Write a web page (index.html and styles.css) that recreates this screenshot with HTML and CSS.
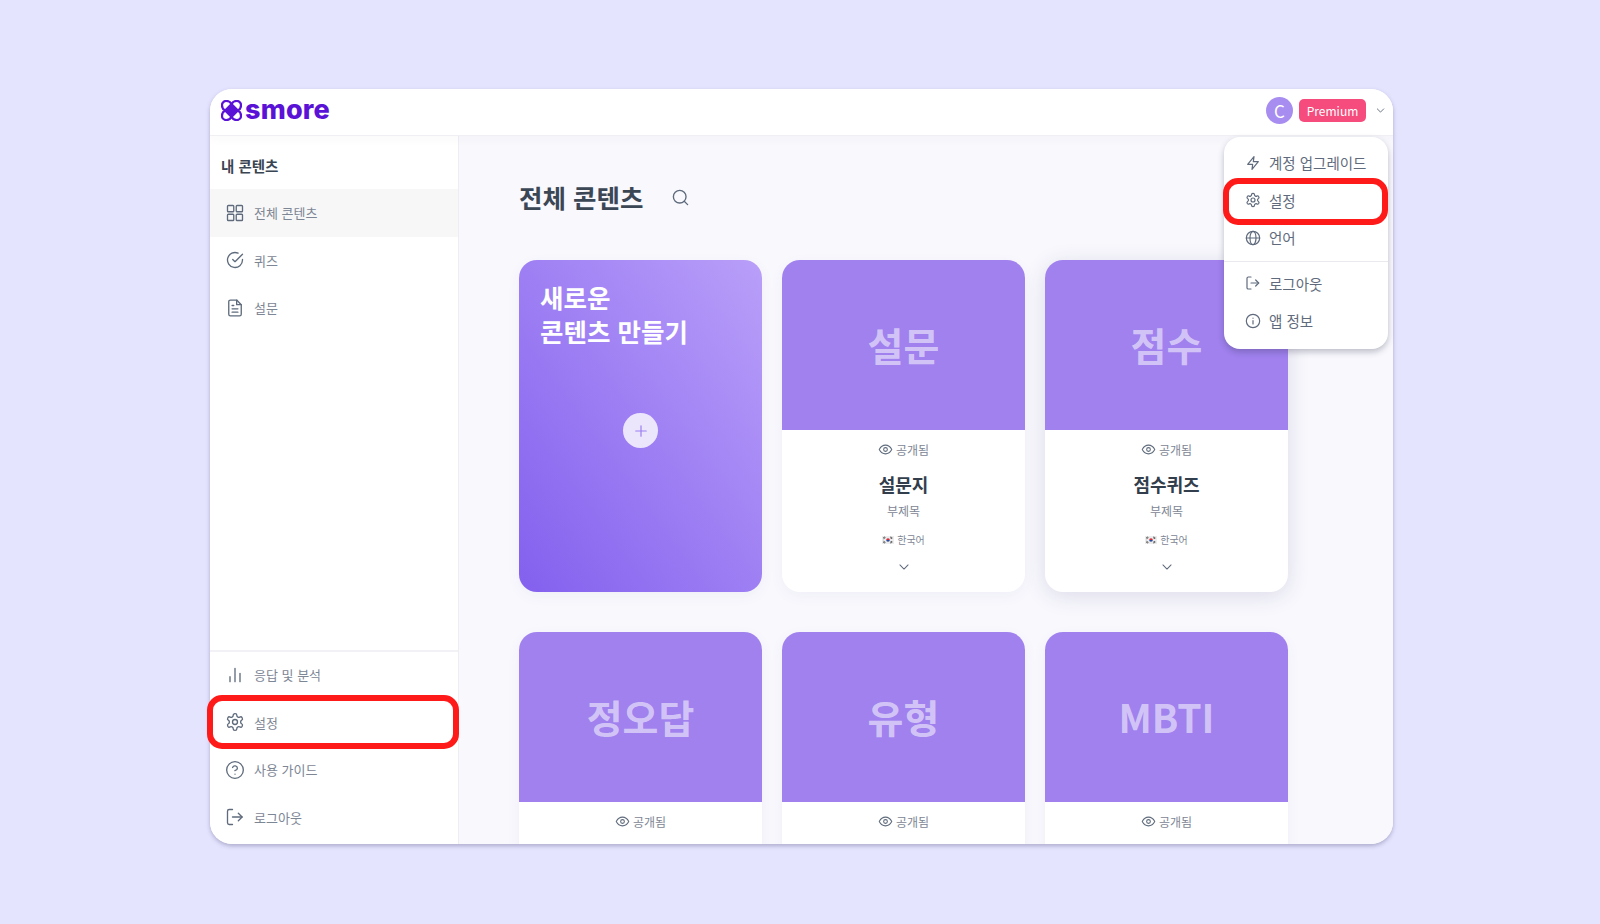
FILE: index.html
```html
<!DOCTYPE html>
<html lang="ko">
<head>
    <meta charset="UTF-8">
    <title>smore 설정</title>
    <link rel="stylesheet" href="styles.css">
</head>
<body>
<svg class="defs" width="0" height="0">
    <defs>
        <symbol id="i_eye" viewBox="0 0 24 24"><path d="M2 12s3.600-7 10-7 10 7 10 7-3.600 7-10 7-10-7-10-7z"/><circle cx="12" cy="12" r="3"/></symbol>
        <symbol id="i_down" viewBox="0 0 24 24"><path d="M5 8.500l7 7 7-7"/></symbol>
        <symbol id="i_gear" viewBox="0 0 24 24"><path d="M12.200 2h-.4a2 2 0 0 0-2 2v.2a2 2 0 0 1-1 1.700l-.4.3a2 2 0 0 1-2 0l-.2-.1a2 2 0 0 0-2.700.7l-.2.4a2 2 0 0 0 .7 2.700l.2.1a2 2 0 0 1 1 1.700v.5a2 2 0 0 1-1 1.800l-.2.1a2 2 0 0 0-.7 2.700l.2.4a2 2 0 0 0 2.700.7l.2-.1a2 2 0 0 1 2 0l.4.3a2 2 0 0 1 1 1.700v.2a2 2 0 0 0 2 2h.4a2 2 0 0 0 2-2v-.2a2 2 0 0 1 1-1.700l.4-.3a2 2 0 0 1 2 0l.2.1a2 2 0 0 0 2.700-.7l.2-.4a2 2 0 0 0-.7-2.700l-.2-.1a2 2 0 0 1-1-1.800v-.5a2 2 0 0 1 1-1.700l.2-.1a2 2 0 0 0 .7-2.700l-.2-.4a2 2 0 0 0-2.700-.7l-.2.1a2 2 0 0 1-2 0l-.4-.3a2 2 0 0 1-1-1.700V4a2 2 0 0 0-2-2z"/><circle cx="12" cy="12" r="3"/></symbol>
        <symbol id="i_logout" viewBox="0 0 24 24"><path d="M9 3H5a2 2 0 0 0-2 2v14a2 2 0 0 0 2 2h4"/><path d="M16 16.500l4.500-4.500L16 7.500"/><path d="M20.500 12H9"/></symbol>
    </defs>
</svg>

<div class="window">
    <div class="window_inner">
        <header class="topbar">
            <div class="logo">
                <svg class="logo_mark" viewBox="0 0 22 22">
                    <path d="M11 4.200C9.500 1.600 7.500 1 5.500 1 3 1 1 3 1 5.500c0 2 .6 4 3.200 5.500C1.600 12.500 1 14.500 1 16.500 1 19 3 21 5.500 21c2 0 4-.6 5.500-3.200 1.500 2.600 3.500 3.200 5.500 3.200 2.500 0 4.500-2 4.500-4.500 0-2-.6-4-3.200-5.500C20.400 9.500 21 7.500 21 5.500 21 3 19 1 16.500 1c-2 0-4 .6-5.500 3.200z" fill="none" stroke="#5a13d6" stroke-width="2.400"/>
                    <path d="M11 4.200L17.800 11 11 17.800 4.200 11z" fill="#5a13d6" stroke="#5a13d6" stroke-width="2" stroke-linejoin="round"/>
                </svg>
                <span class="logo_text">smore</span>
            </div>
            <div class="account">
                <span class="avatar">C</span>
                <span class="badge">Premium</span>
                <svg class="ico ico_caret"><use href="#i_down"/></svg>
            </div>
        </header>

        <div class="layout">
            <aside class="sidebar">
                <div class="side_top">
                    <h2 class="side_title">내 콘텐츠</h2>
                    <a class="side_item active">
                        <svg class="ico ico_side" viewBox="0 0 24 24"><rect x="3" y="3" width="7.500" height="7.500" rx="1"/><rect x="13.500" y="3" width="7.500" height="7.500" rx="1"/><rect x="3" y="13.500" width="7.500" height="7.500" rx="1"/><rect x="13.500" y="13.500" width="7.500" height="7.500" rx="1"/></svg>
                        전체 콘텐츠
                    </a>
                    <a class="side_item">
                        <svg class="ico ico_side" viewBox="0 0 24 24"><path d="M21 11.200V12a9 9 0 1 1-5.300-8.200"/><path d="M21 5l-9 9-2.700-2.700"/></svg>
                        퀴즈
                    </a>
                    <a class="side_item">
                        <svg class="ico ico_side" viewBox="0 0 24 24"><path d="M14 2.500H6.500a2 2 0 0 0-2 2v15a2 2 0 0 0 2 2h11a2 2 0 0 0 2-2V8z"/><path d="M14 2.500V8h5.500"/><path d="M8.500 13h7M8.500 17h7M8.500 9h2"/></svg>
                        설문
                    </a>
                </div>
                <div class="side_bottom">
                    <a class="side_item">
                        <svg class="ico ico_side" viewBox="0 0 24 24"><path d="M12 4v16M18 10v10M6 14v6"/></svg>
                        응답 및 분석
                    </a>
                    <a class="side_item">
                        <svg class="ico ico_side"><use href="#i_gear"/></svg>
                        설정
                    </a>
                    <a class="side_item">
                        <svg class="ico ico_side" viewBox="0 0 24 24"><circle cx="12" cy="12" r="10"/><path d="M9.100 9a3 3 0 0 1 5.800 1c0 2-3 2.800-3 2.800"/><path d="M12 17h.01"/></svg>
                        사용 가이드
                    </a>
                    <a class="side_item">
                        <svg class="ico ico_side"><use href="#i_logout"/></svg>
                        로그아웃
                    </a>
                </div>
            </aside>

            <main class="content">
                <div class="content_head">
                    <h1 class="content_title">전체 콘텐츠</h1>
                    <svg class="ico ico_search" viewBox="0 0 24 24"><circle cx="11" cy="11" r="8"/><path d="M21 21l-4.300-4.300"/></svg>
                </div>
                <div class="card_grid">
                    <div class="card card_new">
                        <p class="new_title">새로운<br>콘텐츠 만들기</p>
                        <span class="new_btn">
                            <svg class="ico ico_plus" viewBox="0 0 24 24"><path d="M12 5v14M5 12h14"/></svg>
                        </span>
                    </div>

                    <div class="card">
                        <div class="card_cover">설문</div>
                        <div class="card_body">
                            <div class="card_state"><svg class="ico ico_eye"><use href="#i_eye"/></svg>공개됨</div>
                            <div class="card_name">설문지</div>
                            <div class="card_sub">부제목</div>
                            <div class="card_lang">
                                <svg class="flag" viewBox="0 0 12 8"><rect width="12" height="8" fill="#ececec"/><path d="M1 2l2-1.200M1.500 2.800l2-1.200M8.500.8l2 1.200M8 1.600l2 1.200M1 6l2 1.200M1.500 5.200l2 1.200M8.500 7.200l2-1.200M8 6.400l2-1.200" stroke="#333" stroke-width=".7"/><path d="M4.200 4a1.800 1.800 0 0 1 3.600 0z" fill="#d8283c"/><path d="M4.200 4a1.800 1.800 0 0 0 3.600 0z" fill="#2a4a9c"/></svg>
                                한국어
                            </div>
                            <svg class="ico ico_more"><use href="#i_down"/></svg>
                        </div>
                    </div>

                    <div class="card card_raised">
                        <div class="card_cover">점수</div>
                        <div class="card_body">
                            <div class="card_state"><svg class="ico ico_eye"><use href="#i_eye"/></svg>공개됨</div>
                            <div class="card_name">점수퀴즈</div>
                            <div class="card_sub">부제목</div>
                            <div class="card_lang">
                                <svg class="flag" viewBox="0 0 12 8"><rect width="12" height="8" fill="#ececec"/><path d="M1 2l2-1.200M1.500 2.800l2-1.200M8.500.8l2 1.200M8 1.600l2 1.200M1 6l2 1.200M1.500 5.200l2 1.200M8.500 7.200l2-1.200M8 6.400l2-1.200" stroke="#333" stroke-width=".7"/><path d="M4.200 4a1.800 1.800 0 0 1 3.600 0z" fill="#d8283c"/><path d="M4.200 4a1.800 1.800 0 0 0 3.600 0z" fill="#2a4a9c"/></svg>
                                한국어
                            </div>
                            <svg class="ico ico_more"><use href="#i_down"/></svg>
                        </div>
                    </div>

                    <div class="card">
                        <div class="card_cover">정오답</div>
                        <div class="card_body">
                            <div class="card_state"><svg class="ico ico_eye"><use href="#i_eye"/></svg>공개됨</div>
                        </div>
                    </div>
                    <div class="card">
                        <div class="card_cover">유형</div>
                        <div class="card_body">
                            <div class="card_state"><svg class="ico ico_eye"><use href="#i_eye"/></svg>공개됨</div>
                        </div>
                    </div>
                    <div class="card">
                        <div class="card_cover">MBTI</div>
                        <div class="card_body">
                            <div class="card_state"><svg class="ico ico_eye"><use href="#i_eye"/></svg>공개됨</div>
                        </div>
                    </div>
                </div>
            </main>
        </div>
    </div>

    <!-- 드롭다운 메뉴 -->
    <div class="menu">
        <a class="menu_item">
            <svg class="ico ico_menu" viewBox="0 0 24 24"><path d="M13.500 2.500L4 14h7.500l-1 7.500L20 10h-7.500z"/></svg>
            계정 업그레이드
        </a>
        <a class="menu_item">
            <svg class="ico ico_menu"><use href="#i_gear"/></svg>
            설정
        </a>
        <a class="menu_item">
            <svg class="ico ico_menu" viewBox="0 0 24 24"><circle cx="12" cy="12" r="10"/><path d="M2 12h20"/><ellipse cx="12" cy="12" rx="4.500" ry="10"/></svg>
            언어
        </a>
        <div class="menu_line"></div>
        <a class="menu_item">
            <svg class="ico ico_menu"><use href="#i_logout"/></svg>
            로그아웃
        </a>
        <a class="menu_item">
            <svg class="ico ico_menu" viewBox="0 0 24 24"><circle cx="12" cy="12" r="10"/><path d="M12 16.500v-5"/><path d="M12 7.800h.01"/></svg>
            앱 정보
        </a>
    </div>

    <!-- 빨간 강조 표시 -->
    <div class="mark mark_side"></div>
    <div class="mark mark_menu"></div>
</div>
</body>
</html>
```

FILE: styles.css
```css
*{
    box-sizing: border-box;
}
body{
    margin: 0;
    height: 924px;
    overflow: hidden;
    background: #e4e4ff;
    padding: 89px 0 0 210px;
    font-family: "Noto Sans CJK KR", "Noto Sans", sans-serif;
}
h1,h2,p{
    margin: 0;
}
.defs{
    position: absolute;
}

/*공통 아이콘*/
.ico{
    display: block;
    flex: none;
    fill: none;
    stroke: #5f6b7c;
    stroke-width: 2;
    stroke-linecap: round;
    stroke-linejoin: round;
}

/*창*/
.window{
    position: relative;
    width: 1183px;
    height: 755px;
}
.window_inner{
    height: 100%;
    background: #fff;
    border-radius: 22px;
    box-shadow: 0 2px 4px rgba(70,70,110,.35);
    overflow: hidden;
}

/*상단바*/
.topbar{
    position: relative;
    height: 47px;
    display: flex;
    align-items: center;
    justify-content: space-between;
    padding: 0 7px 4px 11px;
    background: #fff;
    border-bottom: 1px solid #f0f0f4;
    box-shadow: 0 3px 10px rgba(60,60,90,.03);
}
.logo{
    display: flex;
    align-items: center;
    gap: 3px;
}
.logo_mark{
    width: 21px;
    height: 21px;
}
.logo_text{
    font-family: "Inter", sans-serif;
    font-size: 27px;
    font-weight: 800;
    line-height: 22px;
    letter-spacing: .2px;
    color: #5a13d6;
}
.account{
    display: flex;
    align-items: center;
}
.avatar{
    width: 27px;
    height: 27px;
    border-radius: 50%;
    background: #a88df0;
    color: #fff;
    font-size: 17px;
    line-height: 27px;
    text-align: center;
}
.badge{
    width: 67px;
    height: 23px;
    margin-left: 6px;
    border-radius: 5px;
    background: #f54b7d;
    color: #fff;
    font-size: 12px;
    line-height: 23px;
    text-align: center;
}
.ico_caret{
    width: 11px;
    height: 11px;
    margin-left: 9px;
}

/*사이드바*/
.layout{
    display: flex;
    height: 708px;
}
.sidebar{
    width: 249px;
    flex: none;
    display: flex;
    flex-direction: column;
    justify-content: space-between;
    border-right: 1px solid #eeeef2;
    background: #fff;
}
.side_top{
    padding-top: 20px;
}
.side_title{
    padding-left: 11px;
    margin-bottom: 13px;
    font-size: 14.500px;
    line-height: 20px;
    font-weight: 700;
    color: #3a4554;
}
.side_bottom{
    border-top: 2px solid #f2f2f6;
    padding: 0 0 3px;
}
.side_bottom .side_item:first-child{
    margin-top: -1px;
}
.side_item{
    height: 47.500px;
    display: flex;
    align-items: center;
    gap: 9px;
    padding-left: 15px;
    font-size: 13px;
    color: #7d8694;
}
.side_item.active{
    background: #f7f7f8;
}
.ico_side{
    width: 20px;
    height: 20px;
    stroke-width: 1.600;
}

/*본문*/
.content{
    flex: 1;
    min-width: 0;
    overflow: hidden;
    padding: 43px 0 0 60px;
    background: #f8f8fd;
}
.content_head{
    display: flex;
    align-items: center;
    gap: 28px;
    height: 36px;
    margin-bottom: 45px;
}
.content_title{
    font-size: 25.500px;
    line-height: 36px;
    font-weight: 700;
    color: #3c4756;
}
.ico_search{
    width: 19px;
    height: 19px;
    stroke-width: 1.700;
}
.card_grid{
    display: grid;
    grid-template-columns: repeat(3, 243px);
    grid-auto-rows: 332px;
    gap: 40px 20px;
}

/*카드*/
.card{
    border-radius: 18px;
    background: #fff;
    overflow: hidden;
    box-shadow: 0 4px 14px rgba(90,80,160,.05);
}
.card_raised{
    box-shadow: 0 4px 22px rgba(60,50,110,.14);
}
.card_new{
    position: relative;
    padding: 20px 21px;
    background: linear-gradient(to top right, #8360ee, #b99ff9);
}
.new_title{
    color: #fff;
    font-size: 25.500px;
    line-height: 34px;
    font-weight: 700;
}
.new_btn{
    position: absolute;
    left: 104px;
    top: 153px;
    width: 35px;
    height: 35px;
    border-radius: 50%;
    background: #ece6fd;
    display: flex;
    align-items: center;
    justify-content: center;
}
.ico_plus{
    width: 18px;
    height: 18px;
    stroke: #9a7ff0;
    stroke-width: 1.600;
}
.card_cover{
    height: 170px;
    background: #a081ee;
    color: rgba(255,255,255,.55);
    font-size: 39px;
    font-weight: 700;
    line-height: 168px;
    text-align: center;
}
.card_body{
    display: flex;
    flex-direction: column;
    align-items: center;
    padding-top: 9px;
}
.card_state{
    display: flex;
    align-items: center;
    gap: 3px;
    height: 20px;
    font-size: 12px;
    color: #7d8694;
}
.ico_eye{
    width: 15px;
    height: 15px;
    stroke-width: 1.700;
}
.card_name{
    margin-top: 12px;
    font-size: 18px;
    line-height: 26px;
    font-weight: 700;
    color: #333e4d;
}
.card_sub{
    margin-top: 5px;
    font-size: 12px;
    line-height: 18px;
    color: #7d8694;
}
.card_lang{
    display: flex;
    align-items: center;
    gap: 3px;
    margin-top: 12px;
    font-size: 10px;
    line-height: 16px;
    color: #7d8694;
}
.flag{
    width: 12px;
    height: 8px;
}
.ico_more{
    width: 14px;
    height: 14px;
    margin-top: 12px;
    stroke-width: 1.800;
}

/*드롭다운*/
.menu{
    position: absolute;
    left: 1014px;
    top: 48px;
    width: 164px;
    height: 212px;
    padding: 7px 0;
    background: #fff;
    border-radius: 16px;
    box-shadow: 0 3px 6px rgba(40,40,70,.28);
}
.menu_item{
    height: 37.500px;
    display: flex;
    align-items: center;
    gap: 8px;
    padding-left: 21px;
    font-size: 14.500px;
    color: #5f6b7c;
}
.ico_menu{
    width: 16px;
    height: 16px;
    stroke-width: 1.800;
}
.menu_line{
    height: 1px;
    margin: 4px 0 3px;
    background: #e9e9ee;
}

/*강조 표시*/
.mark{
    position: absolute;
    border: 6.500px solid #ff1a1a;
    border-radius: 15px;
}
.mark_side{
    left: -3px;
    top: 606px;
    width: 252px;
    height: 54px;
}
.mark_menu{
    left: 1013px;
    top: 89px;
    width: 165px;
    height: 47px;
}
```
